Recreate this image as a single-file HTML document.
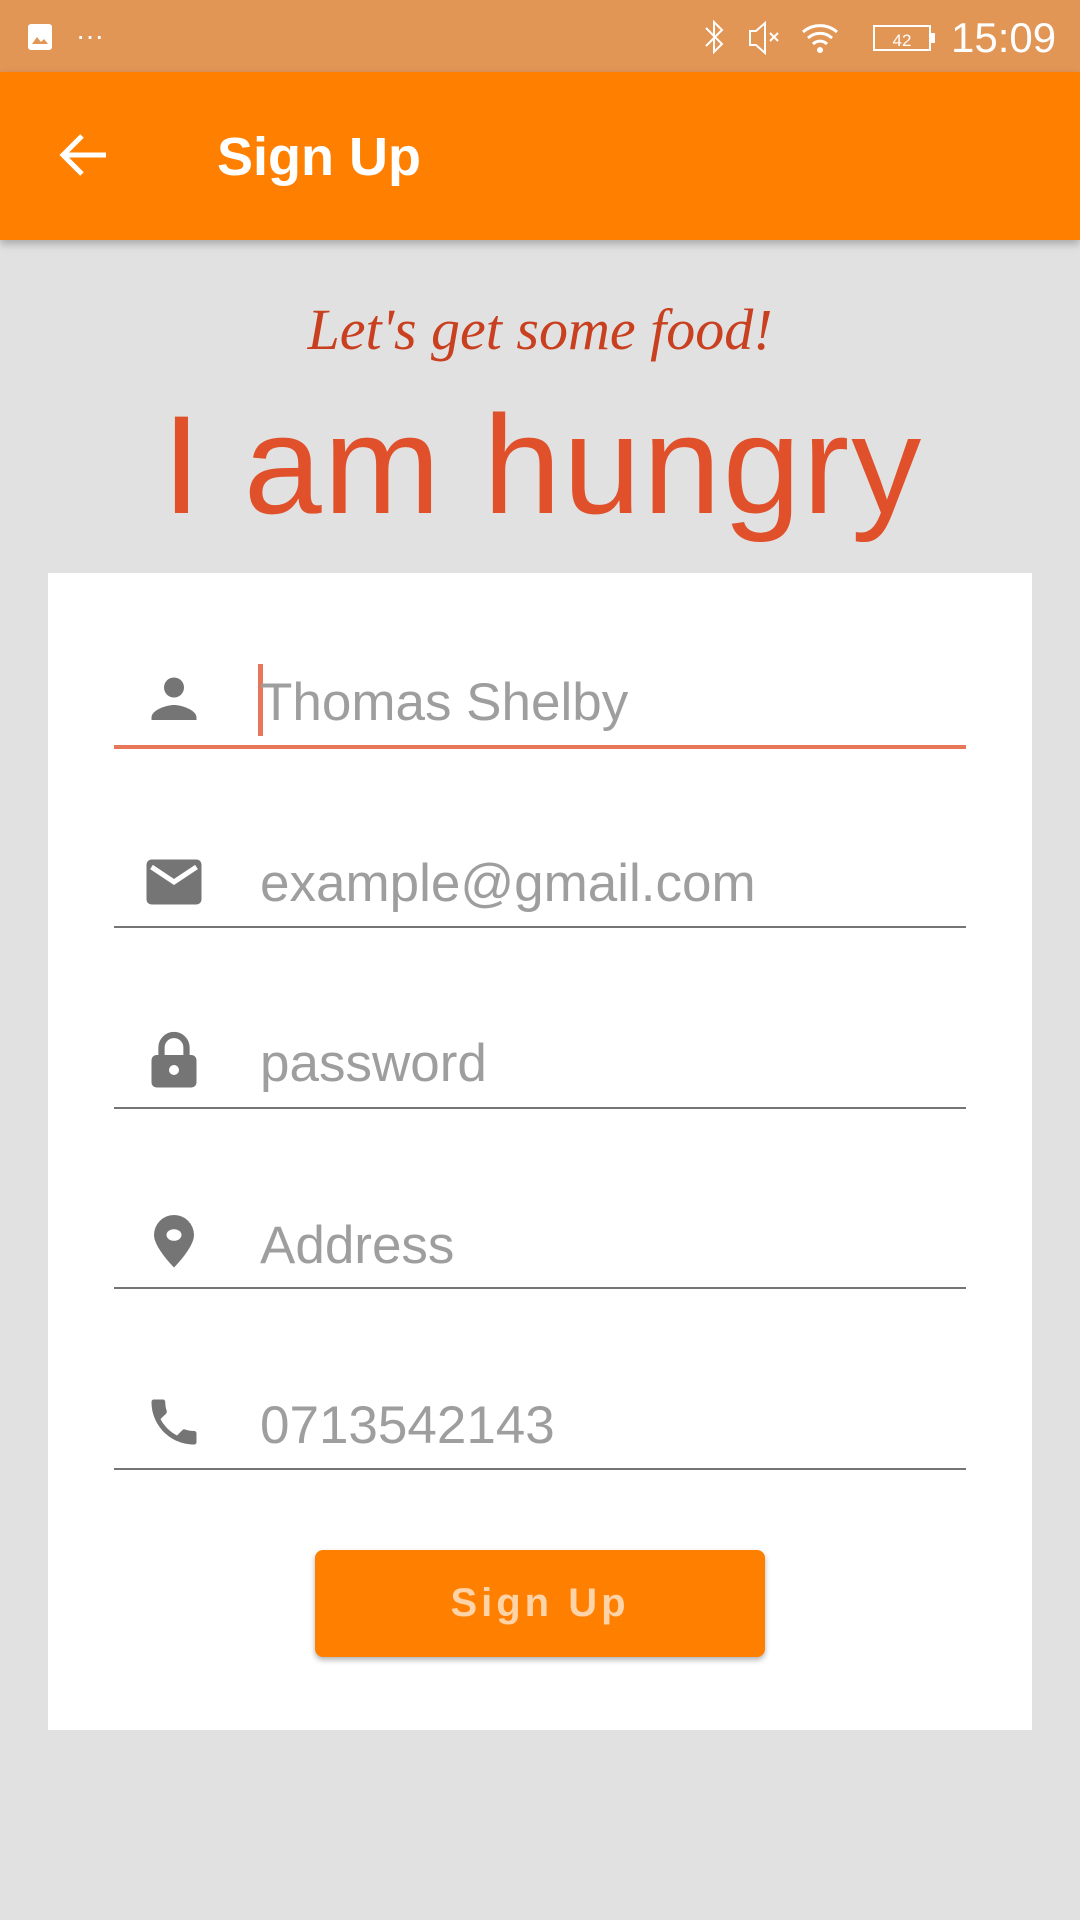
<!DOCTYPE html>
<html><head><meta charset="utf-8"><style>
*{margin:0;padding:0;box-sizing:border-box}
body{width:1080px;height:1920px;background:#e1e1e1;font-family:"Liberation Sans",sans-serif;position:relative;overflow:hidden}
.abs{position:absolute}
.status{left:0;top:0;width:1080px;height:72px;background:#e29656}
.bar{left:0;top:72px;width:1080px;height:168px;background:#ff7f00;box-shadow:0 4px 8px rgba(0,0,0,.25)}
.card{left:48px;top:573px;width:984px;height:1157px;background:#fff}
.line{left:114px;width:852px;height:2px;background:#757575}
.txt{left:260px;font-size:53px;color:#9e9e9e;line-height:60px}
.ic{left:144px;width:60px;height:60px}
</style></head><body>
<div class="abs status"></div>
<svg class="abs" style="left:26px;top:22px" width="30" height="30" viewBox="0 0 30 30"><rect x="2" y="2" width="24" height="26" rx="3" fill="#fff"/><path d="M6 22l5-7 4 5 3-3 4 5z" fill="#e29656"/></svg>
<div class="abs" style="left:76px;top:20px;color:#fff;font-size:28px">···</div>
<svg class="abs" style="left:700px;top:18px" width="240" height="38" viewBox="0 0 240 38">
<path d="M6 10l16 16-8 8V4l8 8L6 28" stroke="#fff" stroke-width="2" fill="none"/>
<path d="M50 13h6l9-8v30l-9-8h-6z" stroke="#fff" stroke-width="2" fill="none"/><path d="M70 15l8 8M78 15l-8 8" stroke="#fff" stroke-width="2"/>
<path d="M103 14a26 26 0 0 1 34 0M108 20a18 18 0 0 1 24 0M113 26a10 10 0 0 1 14 0" stroke="#fff" stroke-width="3" fill="none"/><circle cx="120" cy="32" r="3" fill="#fff"/>
<rect x="174" y="8" width="56" height="24" stroke="#fff" stroke-width="2" fill="none"/><rect x="231" y="15" width="4" height="10" fill="#fff"/>
<text x="202" y="28" font-size="17" fill="#fff" text-anchor="middle" font-family="Liberation Sans">42</text>
</svg>
<div class="abs" style="left:951px;top:14px;color:#fff;font-size:42px">15:09</div>
<div class="abs bar"></div>
<svg class="abs" style="left:56px;top:130px" width="54" height="50" viewBox="0 0 54 50"><path d="M50 25H8M26 6L7 25l19 19" stroke="#fff" stroke-width="5" fill="none"/></svg>
<div class="abs" style="left:217px;top:126px;color:#fff;font-size:54px;font-weight:bold">Sign Up</div>
<div class="abs" style="left:0;width:1080px;top:296px;text-align:center;color:#c8401f;font-family:'Liberation Serif',serif;font-style:italic;font-size:58px">Let's get some food!</div>
<div class="abs" style="left:162px;top:380px;color:#e0502a;font-size:140px;letter-spacing:2px;line-height:170px">I am hungry</div>
<div class="abs card"></div>
<div class="abs line" style="top:745px;height:4px;background:#e8775a"></div>
<div class="abs line" style="top:926px"></div>
<div class="abs line" style="top:1107px"></div>
<div class="abs line" style="top:1287px"></div>
<div class="abs line" style="top:1468px"></div>
<div class="abs" style="left:258px;top:664px;width:5px;height:72px;background:#e8775a"></div>
<div class="abs txt" style="top:673px">Thomas Shelby</div>
<div class="abs txt" style="top:854px">example@gmail.com</div>
<div class="abs txt" style="top:1034px">password</div>
<div class="abs txt" style="top:1216px">Address</div>
<div class="abs txt" style="top:1396px">0713542143</div>
<svg class="abs ic" style="top:670px" viewBox="0 0 24 24"><circle cx="12" cy="7" r="4" fill="#757575"/><path d="M3 20v-1c0-3 6-5 9-5s9 2 9 5v1z" fill="#757575"/></svg>
<svg class="abs ic" style="top:852px" viewBox="0 0 24 24"><rect x="1" y="3" width="22" height="18" rx="2" fill="#757575"/><path d="M3 6l9 6 9-6" stroke="#fff" stroke-width="2" fill="none"/></svg>
<svg class="abs ic" style="top:1030px" viewBox="0 0 24 24"><path d="M7 10V7a5 5 0 0 1 10 0v3" stroke="#757575" stroke-width="2.5" fill="none"/><rect x="3" y="10" width="18" height="13" rx="2" fill="#757575"/><circle cx="12" cy="16" r="2" fill="#fff"/></svg>
<svg class="abs ic" style="top:1210px" viewBox="0 0 24 24"><path d="M12 2a8 8 0 0 0-8 8c0 5 8 13 8 13s8-8 8-13a8 8 0 0 0-8-8z" fill="#757575"/><ellipse cx="12" cy="10" rx="3" ry="2.3" fill="#fff"/></svg>
<svg class="abs ic" style="top:1392px" viewBox="0 0 24 24"><path d="M6.6 10.8c1.4 2.8 3.8 5.1 6.6 6.6l2.2-2.2c.3-.3.7-.4 1-.2 1.1.4 2.3.6 3.6.6.6 0 1 .4 1 1V20c0 .6-.4 1-1 1C10.6 21 3 13.4 3 4c0-.6.4-1 1-1h3.5c.6 0 1 .4 1 1 0 1.3.2 2.5.6 3.6.1.3 0 .7-.2 1z" fill="#757575"/></svg>
<div class="abs" style="left:315px;top:1550px;width:450px;height:107px;background:#ff7f00;border-radius:8px;box-shadow:0 3px 6px rgba(0,0,0,.3);color:#ffd3a8;font-size:40px;font-weight:bold;letter-spacing:4px;text-align:center;line-height:107px">Sign Up</div>
</body></html>
